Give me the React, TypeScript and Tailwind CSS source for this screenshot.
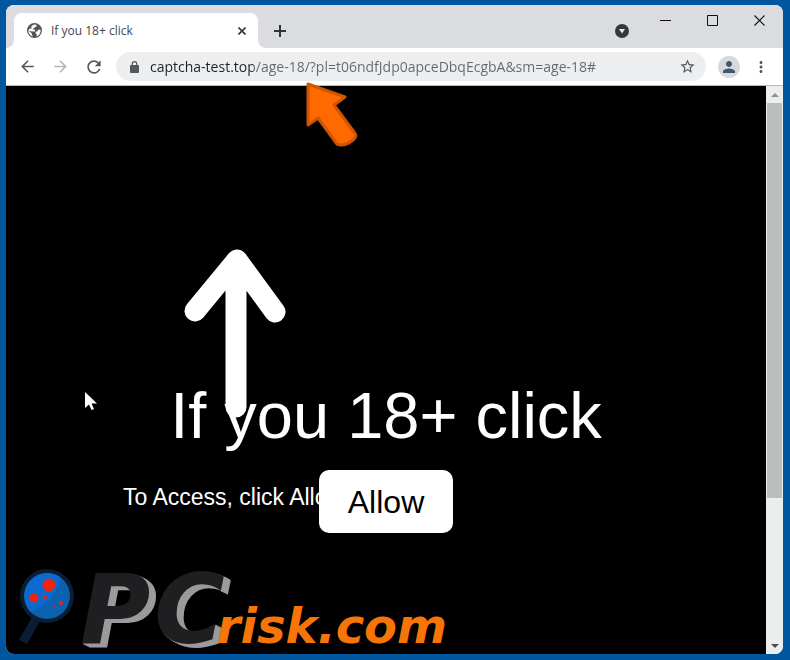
import React, { useState } from "react";
import {
  MdArrowBack,
  MdArrowForward,
  MdRefresh,
  MdStarBorder,
  MdPerson,
  MdMoreVert,
} from "react-icons/md";

function GlobeIcon() {
  return (
    <svg className="ml-px h-[15px] w-[15px]" viewBox="0 0 16 16">
      <circle cx="8" cy="8" r="8" fill="#505357" />
      <path
        d="M7 1.800L4.500 3.500l.5 2-3 .8-.3 2L5 11l1 3.300L3.500 13A6.800 6.800 0 0 1 1.300 8L5 9h3.500V7H6l1.500-2 2.500-1V1.600zM14.700 7.500L12 7l-1 2h-1.500l-.5 2 1.500 1-.5 2.400c2.500-.6 4.500-3 4.700-6.900z"
        fill="#fff"
      />
    </svg>
  );
}

function TabStrip() {
  return (
    <div className="flex h-[43px] shrink-0 items-end bg-[#dadce0]">
      {/* Active tab */}
      <div className="relative ml-2 flex h-[35px] w-[244px] items-center rounded-t-lg bg-white pr-2 pl-3">
        <svg className="absolute bottom-0 -left-2 h-2 w-2" viewBox="0 0 8 8">
          <path d="M8 0v8H0a8 8 0 0 0 8-8z" fill="#fff" />
        </svg>
        <svg className="absolute -right-2 bottom-0 h-2 w-2" viewBox="0 0 8 8">
          <path d="M0 0v8h8a8 8 0 0 1-8-8z" fill="#fff" />
        </svg>
        <GlobeIcon />
        <span className="ml-[9px] flex-1 text-xs text-[#45494d]">If you 18+ click</span>
        <button aria-label="Close tab" className="flex h-4 w-4 items-center justify-center text-[#303337]">
          <svg className="h-2 w-2" viewBox="0 0 8 8" stroke="currentColor" strokeWidth="1.6">
            <path d="M.5.5l7 7M7.500.5l-7 7" />
          </svg>
        </button>
      </div>
      <button aria-label="New tab" className="ml-3 flex h-[35px] w-5 items-center justify-center text-[#303337]">
        <svg className="h-3 w-3" viewBox="0 0 12 12" stroke="currentColor" strokeWidth="2">
          <path d="M6 0v12M0 6h12" />
        </svg>
      </button>

      <div className="flex-1" />

      <button aria-label="Search tabs" className="flex h-[35px] w-4 items-center justify-center">
        <svg className="h-[14px] w-[14px]" viewBox="0 0 14 14">
          <circle cx="7" cy="7" r="7" fill="#35383b" />
          <path d="M4 5h6L7 9.500z" fill="#e4e6e9" />
        </svg>
      </button>
      {/* Window controls */}
      <div className="ml-3 flex h-[43px] items-start text-[#111]">
        <button aria-label="Minimize" className="flex h-[30px] w-[47px] items-center justify-center">
          <svg className="h-[11px] w-[11px]" viewBox="0 0 11 11" stroke="currentColor">
            <path d="M0 5.500h11" />
          </svg>
        </button>
        <button aria-label="Maximize" className="flex h-[30px] w-[47px] items-center justify-center">
          <svg className="h-[11px] w-[11px]" viewBox="0 0 11 11" fill="none" stroke="currentColor">
            <path d="M.5.5h10v10H.5z" />
          </svg>
        </button>
        <button aria-label="Close" className="flex h-[30px] w-[47px] items-center justify-center">
          <svg className="h-[11px] w-[11px]" viewBox="0 0 11 11" stroke="currentColor" strokeWidth="1.1">
            <path d="M.5.5l10 10M10.500.5l-10 10" />
          </svg>
        </button>
      </div>
    </div>
  );
}

function Toolbar() {
  const [url, setUrl] = useState("captcha-test.top/age-18/?pl=t06ndfJdp0apceDbqEcgbA&sm=age-18#");

  return (
    <div className="flex h-[38px] shrink-0 items-center border-b border-[#b8babd] bg-white pr-[13px] pl-3 text-[#55585c]">
      <button aria-label="Back" className="mr-[14px]">
        <MdArrowBack className="h-[19px] w-[19px]" />
      </button>
      <button aria-label="Forward" className="mr-[14px] text-[#b4b6b9]">
        <MdArrowForward className="h-[19px] w-[19px]" />
      </button>
      <button aria-label="Reload" className="mr-3">
        <MdRefresh className="h-5 w-5" />
      </button>
      <div className="flex h-[29px] flex-1 items-center rounded-full bg-[#eceeef] pr-[10px] pl-[14px]">
        <svg className="h-3 w-[9px]" viewBox="0 0 9 12">
          <path d="M2.200 5V3a2.300 2.300 0 0 1 4.600 0v2" fill="none" stroke="currentColor" strokeWidth="1.2" />
          <rect y="4" width="9" height="8" rx="1" fill="currentColor" />
        </svg>
        <input
          aria-label="Address"
          className="ml-[11px] min-w-0 flex-1 bg-[linear-gradient(90deg,#202124_103px,#64686c_103px)] bg-clip-text text-sm text-transparent outline-none"
          value={url}
          onChange={(e) => setUrl(e.target.value)}
        />
        <button aria-label="Bookmark this page">
          <MdStarBorder className="h-[17px] w-[17px]" />
        </button>
      </div>
      <button
        aria-label="Profile"
        className="ml-3 flex h-[22px] w-[22px] items-center justify-center rounded-full bg-[#d6d9dd] text-[#44566c]"
      >
        <MdPerson className="h-[18px] w-[18px]" />
      </button>
      <button aria-label="Menu" className="ml-3">
        <MdMoreVert className="h-[18px] w-[18px]" />
      </button>
    </div>
  );
}

function Scrollbar() {
  return (
    <div className="flex w-[17px] shrink-0 flex-col bg-[#eceded]">
      <div className="flex h-[17px] items-center justify-center">
        <svg className="h-1 w-2" viewBox="0 0 8 4">
          <path d="M0 4l4-4 4 4z" fill="#8f9294" />
        </svg>
      </div>
      <div className="flex-1">
        <div className="mx-px h-[74%] bg-[#bcbdbe]" />
      </div>
      <div className="flex h-[17px] items-center justify-center">
        <svg className="h-1 w-2" viewBox="0 0 8 4">
          <path d="M0 0l4 4 4-4z" fill="#4b4d4e" />
        </svg>
      </div>
    </div>
  );
}

function Watermark() {
  return (
    <div className="absolute bottom-0 left-3 flex items-end">
      <svg className="h-[86px] w-[62px]" viewBox="0 0 62 86">
        <path d="M18 51L5 74" stroke="#0c1d33" strokeWidth="9" />
        <circle cx="29" cy="28" r="27" fill="#0c1d33" />
        <circle cx="29" cy="28" r="23" fill="#0c61ae" />
        <path d="M29 5a23 23 0 0 0-16 39C28 38 40 26 42 9a23 23 0 0 0-13-4z" fill="#0b6ad0" />
        <circle cx="31" cy="17" r="6.500" fill="#ee2410" />
        <circle cx="16" cy="30" r="4.500" fill="#ee2410" />
        <circle cx="27" cy="29" r="2" fill="#ee2410" />
        <circle cx="43" cy="35" r="2" fill="#ee2410" />
        <circle cx="36" cy="38" r="1" fill="#ee2410" />
      </svg>
      <p className="flex items-baseline font-['DejaVu_Sans'] font-bold italic">
        <span className="flex gap-1 text-[96px] leading-[88px] text-[#1f1f21] [text-shadow:1px_1px_#9b9b9d,2px_1px_#9b9b9d,3px_2px_#9b9b9d,4px_2px_#9b9b9d,5px_3px_#9b9b9d,6px_3px_#9b9b9d,7px_4px_#9b9b9d]">
          <span>P</span>
          <span>C</span>
        </span>
        <span className="-ml-2 text-5xl text-[#f77408]">risk.com</span>
      </p>
    </div>
  );
}

function LandingPage() {
  return (
    <main className="relative flex-1 bg-black pt-[295px] pb-[121px] font-['Liberation_Sans',sans-serif] text-white">
      {/* Arrow pointing to the browser prompt */}
      <svg
        className="absolute top-[163px] left-[178px] h-[170px] w-[102px]"
        viewBox="0 0 102 170"
        fill="none"
        stroke="#fff"
        strokeWidth="21"
        strokeLinecap="round"
        strokeLinejoin="round"
      >
        <path d="M11 62L53 11L91 63M52 12V158" />
      </svg>
      <h1 className="relative text-center text-[65px] leading-[70px]">If you 18+ click</h1>
      <div className="relative mt-[19px] h-[63px] pt-[11px] pl-[117px]">
        <p className="text-[23px] leading-8">To Access, click Allow</p>
        <button className="absolute top-0 left-1/2 h-[63px] w-[134px] -translate-x-1/2 rounded-[10px] bg-white text-[32px] text-black">
          Allow
        </button>
      </div>

      {/* Mouse pointer */}
      <svg className="absolute top-[306px] left-[79px] h-[19px] w-3" viewBox="0 0 12 19">
        <path d="M0 0v16l4-3.500L6.500 18l2.500-1-2.500-5.500H12z" fill="#fff" />
      </svg>
      {/* Orange pointer under the address bar */}
      <svg className="absolute -top-1 left-[299px] h-[66px] w-[54px]" viewBox="0 0 54 66">
        <path
          d="M3 2L40 15L29 23L49 50Q53 54 48 58Q39 65 32 62L13 36L3 43Z"
          fill="#ff6a00"
          stroke="#d35400"
          strokeWidth="3"
          strokeLinejoin="round"
        />
      </svg>
      <Watermark />
    </main>
  );
}

export default function App() {
  return (
    <div className="flex min-h-screen flex-col bg-[#0057a0] pt-[5px] pr-[7px] pb-[6px] pl-[6px] font-['Open_Sans','Noto_Sans',sans-serif]">
      <div className="flex flex-1 flex-col overflow-hidden rounded-lg bg-white">
        <TabStrip />
        <Toolbar />
        <div className="flex flex-1">
          <LandingPage />
          <Scrollbar />
        </div>
      </div>
    </div>
  );
}
